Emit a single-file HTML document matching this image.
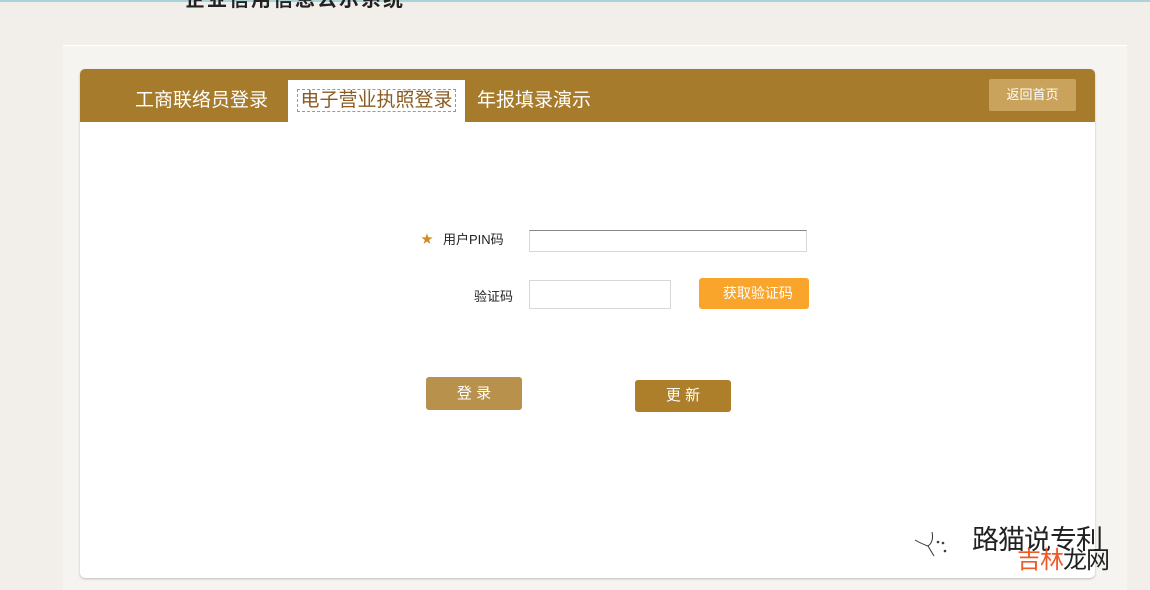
<!DOCTYPE html>
<html><head><meta charset="utf-8">
<style>
*{margin:0;padding:0;box-sizing:border-box}
body{width:1150px;height:590px;background:#f2efeb;position:relative;overflow:hidden;font-family:"Liberation Sans","Noto Sans CJK SC",sans-serif}
.top{position:absolute;left:0;top:0;width:1150px;height:2px;background:#a9d3d8}
.topt{position:absolute;left:185px;top:-17px;font-size:20px;color:#222;font-weight:bold;letter-spacing:2px}
.panel{position:absolute;left:63px;top:45px;width:1064px;height:545px;background:#f6f4f1;border-top:1px solid #fff}
.card{position:absolute;left:80px;top:69px;width:1015px;height:509px;background:#fff;border-radius:5px;box-shadow:0 1px 2px #bbb;overflow:hidden}
.hd{position:absolute;left:0;top:0;width:1015px;height:53px;background:#a77b2c}
.tab{position:absolute;top:11px;height:42px;line-height:42px;font-size:19px;color:#fff;white-space:nowrap}
.t1{left:55px}
.t2{left:208px;width:177px;background:#fff;color:#8a5a20;text-align:center}
.t2 span{border:1px dashed #999;padding:0 2px}
.t3{left:397px}
.back{position:absolute;left:909px;top:10px;width:87px;height:32px;background:#c9a35c;color:#fff;font-size:13px;text-align:center;line-height:32px;border-radius:2px}
.lbl{position:absolute;font-size:13px;color:#222}
.in{position:absolute;background:#fff;border:1px solid #d8d8d8}
.btn{position:absolute;color:#fff;font-size:15px;text-align:center;border-radius:3px}
.wm{position:absolute;left:972px;top:518px;font-size:27px;color:#222;letter-spacing:-1px}
.wm2{position:absolute;left:1017px;top:540px;font-size:24px;letter-spacing:-1px}
</style></head><body>
<div class="top"></div>
<div class="topt">企业信用信息公示系统</div>
<div class="panel"></div>
<div class="card">
 <div class="hd">
  <div class="tab t1">工商联络员登录</div>
  <div class="tab t2"><span>电子营业执照登录</span></div>
  <div class="tab t3">年报填录演示</div>
  <div class="back">返回首页</div>
 </div>
</div>
<div class="lbl" style="left:421px;top:230px;color:#d48a20;font-size:12px">★</div>
<div class="lbl" style="left:443px;top:229px">用户PIN码</div>
<div class="in" style="left:529px;top:230px;width:278px;height:22px;border-top:1px solid #888"></div>
<div class="lbl" style="left:474px;top:286px">验证码</div>
<div class="in" style="left:529px;top:280px;width:142px;height:29px"></div>
<div class="btn" style="left:699px;top:278px;width:110px;height:31px;line-height:31px;background:#f9a52c;font-size:14px">&nbsp;&nbsp;获取验证码</div>
<div class="btn" style="left:426px;top:377px;width:96px;height:33px;line-height:33px;background:#b8914d">登 录</div>
<div class="btn" style="left:635px;top:380px;width:96px;height:32px;line-height:32px;background:#ad7f2a">更 新</div>
<svg style="position:absolute;left:912px;top:520px" width="40" height="40"><g fill="none" stroke="#333" stroke-width="1"><path d="M3 20 Q10 24 16 26 Q22 22 20 12"/><path d="M16 26 L22 36"/><circle cx="26" cy="22" r="0.8"/><circle cx="31" cy="23" r="0.8"/><circle cx="33" cy="31" r="0.8"/></g></svg>
<div class="wm">路猫说专利</div>
<div class="wm2"><span style="color:#f05a28">吉林</span><span style="color:#222">龙网</span></div>
</body></html>
